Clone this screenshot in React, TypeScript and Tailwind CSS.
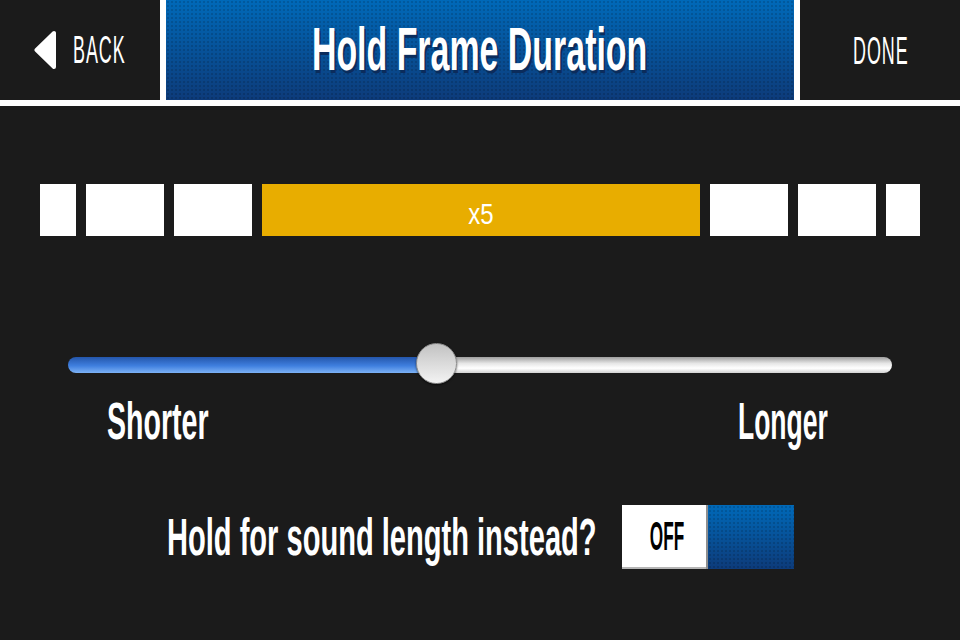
export default function App() {
  const font = "font-['Liberation_Sans',Arial,sans-serif]";
  const blueBg =
    "[background:radial-gradient(rgba(0,0,0,0.14)_1px,transparent_1.6px)_0_0/4px_4px,linear-gradient(to_bottom,#0069b9,#0d3b7a)]";

  return (
    <div className={`h-[640px] w-[960px] overflow-hidden bg-[#1b1b1b] ${font}`}>
      {/* Top bar */}
      <header className="flex h-[106px] gap-[6px] bg-white pb-[6px]">
        <button className="flex h-[100px] w-[160px] items-center justify-center gap-4 bg-[#1b1b1b]">
          <svg width="23" height="40" viewBox="0 0 23 40">
            <path
              d="M20 3 L20 37 L2.5 20 Z"
              fill="white"
              stroke="white"
              strokeWidth="4"
              strokeLinejoin="round"
            />
          </svg>
          <span className="block w-[53px]">
            <span className="inline-block origin-left scale-x-[0.46] whitespace-nowrap text-[39px] leading-none tracking-[2px] text-white">
              BACK
            </span>
          </span>
        </button>

        <div className={`flex h-[100px] flex-1 items-center justify-center ${blueBg}`}>
          <h1 className="-mt-[3px] inline-block origin-center scale-x-[0.547] whitespace-nowrap text-[62px] font-bold leading-none text-white [text-shadow:3px_3px_0_#0b2c5c]">
            Hold Frame Duration
          </h1>
        </div>

        <button className="flex h-[100px] w-[160px] items-center justify-center bg-[#1b1b1b]">
          <span className="inline-block origin-center scale-x-[0.46] whitespace-nowrap pl-[2px] text-[39px] leading-none tracking-[2px] text-white">
            DONE
          </span>
        </button>
      </header>

      {/* Frame strip */}
      <div className="mt-[78px] flex h-[52px] gap-[10px] px-10">
        <div className="w-[36px] bg-white" />
        <div className="w-[78px] bg-white" />
        <div className="w-[78px] bg-white" />
        <div className="flex flex-1 items-center justify-center bg-[#e8ad00] pt-2">
          <span className="inline-block origin-center scale-x-[0.8] text-[30px] leading-none text-white">
            x5
          </span>
        </div>
        <div className="w-[78px] bg-white" />
        <div className="w-[78px] bg-white" />
        <div className="w-[34px] bg-white" />
      </div>

      {/* Slider */}
      <div className="relative mx-[68px] mt-[106px] h-[42px] pt-[15px]">
        <div className="flex h-[16px]">
          <div className="w-[369px] rounded-l-full bg-[linear-gradient(to_bottom,#2456ab,#3f7fdf_55%,#7db2f5)]" />
          <div className="flex-1 rounded-r-full bg-[linear-gradient(to_bottom,#9e9e9e,#e6e6e6_40%,#ffffff_70%,#d2d2d2)]" />
        </div>
        <div className="absolute left-[348px] top-[1px] h-[41px] w-[41px] rounded-full border border-[#8c8c8c] bg-[linear-gradient(to_bottom,#c2c2c2,#f3f3f3)] shadow-[0_1px_2px_rgba(0,0,0,0.6)]" />
      </div>

      <div className="mt-[12px] flex justify-between pl-[107px] pr-[132px]">
        <span className="block w-[102px]">
          <span className="inline-block origin-left scale-x-[0.56] whitespace-nowrap text-[51px] font-bold leading-none text-white">
            Shorter
          </span>
        </span>
        <span className="flex w-[88px] justify-end">
          <span className="inline-block origin-right scale-x-[0.52] whitespace-nowrap text-[51px] font-bold leading-none text-white">
            Longer
          </span>
        </span>
      </div>

      {/* Sound length toggle */}
      <div className="mt-[58px] flex items-center justify-center gap-[25px]">
        <span className="block w-[430px]">
          <span className="inline-block origin-left scale-x-[0.57] whitespace-nowrap text-[51px] font-bold leading-none text-white">
            Hold for sound length instead?
          </span>
        </span>
        <div className="flex h-[64px] w-[172px]">
          <div className="flex w-[84px] items-center justify-center border-b-2 border-[#b5b5b5] bg-white pl-[6px]">
            <span className="inline-block origin-center scale-x-[0.43] text-[40px] font-bold leading-none text-black">
              OFF
            </span>
          </div>
          <div className="w-[2px] bg-[#8f8f8f]" />
          <div className={`flex-1 ${blueBg}`} />
        </div>
      </div>
    </div>
  );
}
